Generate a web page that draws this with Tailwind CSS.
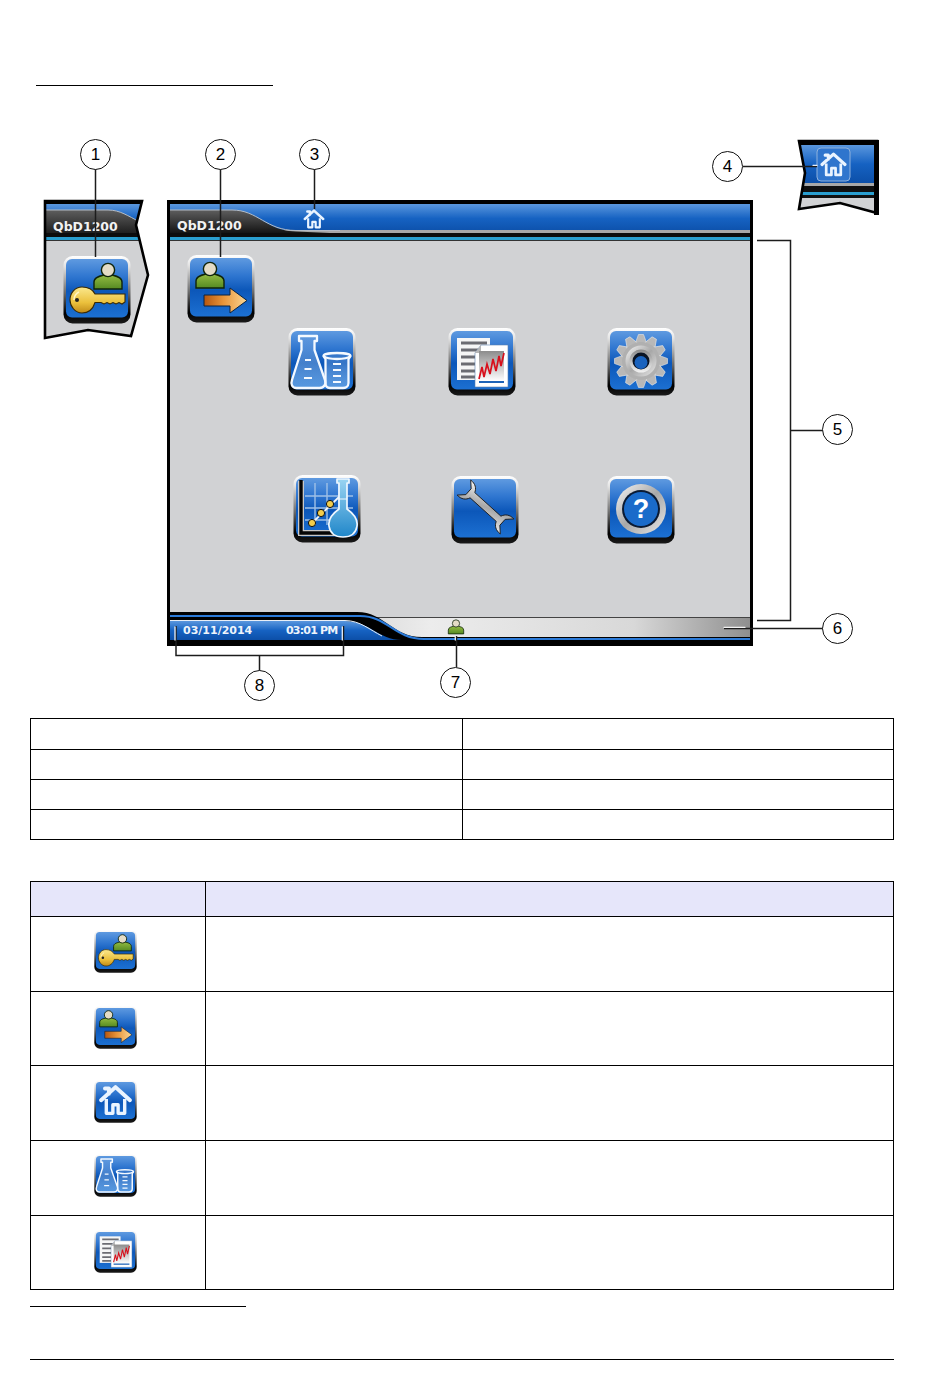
<!DOCTYPE html>
<html lang="en">
<head>
  <meta charset="UTF-8" />
  <title>QbD1200 Main Menu</title>
  <script src="https://cdn.jsdelivr.net/npm/@tailwindcss/browser@4"></script>
</head>
<body class="bg-white font-['Liberation_Sans',sans-serif] text-black">

<!-- shared gradients and icons -->
<svg class="absolute w-0 h-0" aria-hidden="true">
  <defs>
    <linearGradient id="halo" x1="0" y1="0" x2="0" y2="1">
      <stop offset="0" stop-color="#ffffff"/><stop offset=".15" stop-color="#e4e4e4"/><stop offset=".55" stop-color="#6a6a6a"/><stop offset=".85" stop-color="#000000"/><stop offset="1" stop-color="#1a1a1a"/>
    </linearGradient>
    <linearGradient id="face" x1="0" y1="0" x2="0" y2="1">
      <stop offset="0" stop-color="#5f9ae0"/><stop offset=".3" stop-color="#2f76d0"/><stop offset=".55" stop-color="#0c57b9"/><stop offset="1" stop-color="#1c70d2"/>
    </linearGradient>
    <linearGradient id="bar" x1="0" y1="0" x2="0" y2="1">
      <stop offset="0" stop-color="#5a97de"/><stop offset=".5" stop-color="#1662c2"/><stop offset="1" stop-color="#0c4fa8"/>
    </linearGradient>
    <linearGradient id="tab" x1="0" y1="0" x2="0" y2="1">
      <stop offset="0" stop-color="#5e5e5e"/><stop offset="1" stop-color="#141414"/>
    </linearGradient>
    <linearGradient id="gold" x1="0" y1="0" x2="0" y2="1">
      <stop offset="0" stop-color="#fbe98e"/><stop offset=".6" stop-color="#ebc03c"/><stop offset="1" stop-color="#c08a18"/>
    </linearGradient>
    <linearGradient id="arrow" x1="0" y1="0" x2="1" y2="0">
      <stop offset="0" stop-color="#b5560f"/><stop offset=".45" stop-color="#e8953a"/><stop offset="1" stop-color="#fbd794"/>
    </linearGradient>
    <linearGradient id="green" x1="0" y1="0" x2="0" y2="1">
      <stop offset="0" stop-color="#93bb42"/><stop offset="1" stop-color="#558a22"/>
    </linearGradient>
    <linearGradient id="silver" x1="0" y1="0" x2="1" y2="1">
      <stop offset="0" stop-color="#f6f6f6"/><stop offset=".5" stop-color="#a8a8a8"/><stop offset="1" stop-color="#e8e8e8"/>
    </linearGradient>
    <linearGradient id="ring" x1="0" y1="0" x2="0" y2="1">
      <stop offset="0" stop-color="#8a8a8a"/><stop offset="1" stop-color="#f2f2f2"/>
    </linearGradient>
    <linearGradient id="glass" x1="0" y1="0" x2="0" y2="1">
      <stop offset="0" stop-color="#ffffff" stop-opacity=".08"/><stop offset="1" stop-color="#8fc0ee" stop-opacity=".5"/>
    </linearGradient>
    <linearGradient id="chart" x1="0" y1="0" x2="0" y2="1">
      <stop offset="0" stop-color="#8c8c8c"/><stop offset="1" stop-color="#ffffff"/>
    </linearGradient>
    <linearGradient id="liquid" x1="0" y1="0" x2="0" y2="1">
      <stop offset="0" stop-color="#9ad4f2"/><stop offset="1" stop-color="#1f86c9"/>
    </linearGradient>
    <linearGradient id="strip" x1="0" y1="0" x2="1" y2="0">
      <stop offset="0" stop-color="#777777"/><stop offset=".12" stop-color="#bdbdbd"/><stop offset=".45" stop-color="#ececec"/><stop offset=".8" stop-color="#d8d8d8"/><stop offset="1" stop-color="#8f8f8f"/>
    </linearGradient>

    <g id="base">
      <rect x="0.5" y="0" width="67" height="67.500" rx="9" fill="url(#halo)"/>
      <rect x="3" y="3" width="62" height="58.500" rx="6" fill="url(#face)"/>
    </g>

    <g id="person">
      <path d="M-14 18 V11 C-14 6 -8 5 -4 4 H4 C8 5 14 6 14 11 V18 Z" fill="url(#green)" stroke="#10240a" stroke-width="1.4"/>
      <circle cx="0" cy="-1" r="6.600" fill="#e4dcc6" stroke="#10240a" stroke-width="1.4"/>
    </g>

    <symbol id="i-login" viewBox="0 0 68 68">
      <use href="#base"/>
      <use href="#person" x="45" y="15"/>
      <path d="M19 31 C25 31 30 34 32 38 H62 V46 L59 48 L56 46.500 L53 48 L50 46.500 L47 48 L44 46.500 L41 48 L38 46.500 H32 C30 53 25 57 19 57 C12 57 7 50 7 44 C7 37 12 31 19 31 Z" fill="url(#gold)" stroke="#3a2a05" stroke-width="1.1"/>
      <path d="M16 36 C12 38 11 41 11 44" fill="none" stroke="#fff6c4" stroke-width="1.5"/>
      <circle cx="14" cy="44" r="2" fill="#222"/>
    </symbol>

    <symbol id="i-logout" viewBox="0 0 68 68">
      <use href="#base"/>
      <use href="#person" x="23" y="15"/>
      <path d="M17 40 H43 V33 L60 45.500 L43 58 V51 H17 Z" fill="url(#arrow)" stroke="#0a2240" stroke-width="1"/>
    </symbol>

    <symbol id="i-flask" viewBox="0 0 68 68">
      <use href="#base"/>
      <g fill="url(#glass)" stroke="#f4f9ff" stroke-width="2.300" stroke-linejoin="round">
        <path d="M11 8 H29 V13 H26.500 V22 L37 52 C38.500 56 36 60 31.500 60 H8.500 C4 60 2.500 56 4 52 L13.500 22 V13 H11 Z"/>
        <path d="M35.500 28 C35.500 24 62.500 24 62.500 28 L60.500 31 V55 C60.500 59 57 60 55 60 H42 C39 60 37.500 58 37.500 55 V31 Z"/>
        <path d="M35.500 28 C40 32 58 32 62.500 28" fill="none"/>
      </g>
      <g stroke="#f4f9ff" stroke-width="2">
        <path d="M17 32 H23 M16.500 41 H23.500 M16 50 H24"/>
        <path d="M45 36 H53 M45 42 H53 M45 48 H53 M45 54 H53"/>
      </g>
    </symbol>

    <symbol id="i-report" viewBox="0 0 68 68">
      <use href="#base"/>
      <rect x="9" y="10" width="33" height="42" fill="#f6f6f6"/>
      <g stroke="#6c6c72" stroke-width="2.800">
        <path d="M13 15 H39 M13 22 H39 M13 29 H27 M13 36 H27 M13 43 H27 M13 49 H27"/>
      </g>
      <path d="M33 17 H60 V59 H27 V25 Z" fill="#ffffff" stroke="#5a7fae" stroke-width=".6"/>
      <path d="M27 25 L33 17 V25 Z" fill="#b5b5b5"/>
      <rect x="31" y="23" width="25" height="30" fill="url(#chart)"/>
      <path d="M31 51 L34 39 L36 49 L39 36 L42 46 L45 31 L48 43 L51 28 L53 38 L56 25" fill="none" stroke="#d8101c" stroke-width="1.700"/>
      <path d="M31 54 H56" stroke="#1d63b8" stroke-width="2"/>
    </symbol>

    <symbol id="i-gear" viewBox="0 0 68 68">
      <use href="#base"/>
      <g fill="#b8b8b8" stroke="#e8e8e8" stroke-width=".6">
        <path d="M31.500 6.500 H36.500 L40 16 H28 Z"/>
        <path transform="rotate(30 34 33)" d="M31.500 6.500 H36.500 L40 16 H28 Z"/>
        <path transform="rotate(60 34 33)" d="M31.500 6.500 H36.500 L40 16 H28 Z"/>
        <path transform="rotate(90 34 33)" d="M31.500 6.500 H36.500 L40 16 H28 Z"/>
        <path transform="rotate(120 34 33)" d="M31.500 6.500 H36.500 L40 16 H28 Z"/>
        <path transform="rotate(150 34 33)" d="M31.500 6.500 H36.500 L40 16 H28 Z"/>
        <path transform="rotate(180 34 33)" d="M31.500 6.500 H36.500 L40 16 H28 Z"/>
        <path transform="rotate(210 34 33)" d="M31.500 6.500 H36.500 L40 16 H28 Z"/>
        <path transform="rotate(240 34 33)" d="M31.500 6.500 H36.500 L40 16 H28 Z"/>
        <path transform="rotate(270 34 33)" d="M31.500 6.500 H36.500 L40 16 H28 Z"/>
        <path transform="rotate(300 34 33)" d="M31.500 6.500 H36.500 L40 16 H28 Z"/>
        <path transform="rotate(330 34 33)" d="M31.500 6.500 H36.500 L40 16 H28 Z"/>
      </g>
      <circle cx="34" cy="33" r="19" fill="#b0b0b0"/>
      <circle cx="34" cy="33" r="15.500" fill="url(#silver)"/>
      <circle cx="34" cy="33" r="11.500" fill="url(#ring)"/>
      <circle cx="34" cy="33" r="8.500" fill="#0a1424"/>
      <circle cx="34" cy="34.500" r="6.500" fill="#1a63be"/>
    </symbol>

    <symbol id="i-graph" viewBox="0 0 68 68">
      <use href="#base"/>
      <g stroke="#9fc0e6" stroke-width="1.400">
        <path d="M22 8 V50 M34 8 V50 M46 8 V50 M12 21 H60 M12 33 H60 M12 45 H60"/>
      </g>
      <path d="M8 6 V58 H52" fill="none" stroke="#c8c8c8" stroke-width="6"/>
      <path d="M8 5 V58 H52" fill="none" stroke="#050505" stroke-width="3.400"/>
      <path d="M19 48 L46 22" stroke="#f2f6fb" stroke-width="1.800"/>
      <g fill="#f3cd4c" stroke="#111" stroke-width="1">
        <circle cx="19" cy="48" r="3.600"/><circle cx="28" cy="38" r="3.600"/><circle cx="37" cy="29" r="3.600"/>
      </g>
      <path d="M44 4 H56 V8 H54 V34 C61 39 65 45 64 51 C63 58 58 62 50 62 C42 62 37 58 36 51 C35 45 39 39 46 34 V8 H44 Z" fill="url(#liquid)" stroke="#eef7ff" stroke-width="1.700" stroke-linejoin="round"/>
      <path d="M46 24 H54" stroke="#eef7ff" stroke-width="1"/>
    </symbol>

    <symbol id="i-wrench" viewBox="0 0 68 68">
      <use href="#base"/>
      <path transform="translate(34.500 31) rotate(42) scale(.88)" d="M-20 -4 L20 -4 C22 -9 26 -12 33 -11.500 L26 -4.500 L26 4.500 L33 11.500 C26 12 22 9 20 4 L-20 4 C-22 9 -26 12 -33 11.500 L-26 4.500 L-26 -4.500 L-33 -11.500 C-26 -12 -22 -9 -20 -4 Z" fill="url(#silver)" stroke="#1b1b1b" stroke-width="1"/>
    </symbol>

    <symbol id="i-help" viewBox="0 0 68 68">
      <use href="#base"/>
      <circle cx="34" cy="33" r="25" fill="url(#silver)"/>
      <circle cx="34" cy="33" r="19" fill="#0a1a33"/>
      <circle cx="34" cy="33" r="17" fill="#1a6bca"/>
      <text x="34" y="42" text-anchor="middle" font-family="Liberation Sans" font-weight="700" font-size="27" fill="#ffffff">?</text>
    </symbol>

    <symbol id="g-home" viewBox="0 0 26 24">
      <path d="M2 12 L13 2 L24 12 M5 3 H8 V7" fill="none" stroke="#eaf4ff" stroke-width="3" stroke-linejoin="round" stroke-linecap="round"/>
      <path d="M6 11 V22 H11 V15.500 H15 V22 H20 V11" fill="none" stroke="#eaf4ff" stroke-width="2.600" stroke-linejoin="round"/>
    </symbol>

    <symbol id="i-home" viewBox="0 0 68 68">
      <use href="#base"/>
      <use href="#g-home" x="7" y="7" width="54" height="50"/>
    </symbol>
  </defs>
</svg>

<div class="w-[950px] h-[1374px] overflow-hidden">

  <div class="pt-[85px] pl-[36px]">
    <div class="w-[237px] border-t border-black"></div>
  </div>

  <!-- annotated screen diagram, canvas y = page y - 86 -->
  <div class="relative h-[632px]">

    <!-- torn fragments, left and right of the main screen -->
    <svg class="absolute left-0 top-0" width="950" height="632" viewBox="0 86 950 632">
      <clipPath id="fragLeft"><path d="M45 201 H142 L136 225 L148 275 L131 336 L88 330 L45 338 Z"/></clipPath>
      <g clip-path="url(#fragLeft)">
        <rect x="44" y="200" width="110" height="140" fill="#d1d2d4"/>
        <rect x="44" y="200" width="110" height="4" fill="#000"/>
        <rect x="44" y="204" width="110" height="29" fill="url(#bar)"/>
        <path d="M44 210 H108 C120 210 128 216 140 222 V237 H44 Z" fill="url(#tab)"/>
        <path d="M44 210 H108 C120 210 128 216 140 222" fill="none" stroke="#b4bcc6" stroke-width="1"/>
        <rect x="44" y="233" width="110" height="4" fill="#0d0d0d"/>
        <rect x="44" y="237" width="110" height="3" fill="#2a9fd0"/>
        <rect x="44" y="240" width="110" height="1" fill="#333"/>
      </g>
      <path d="M45 201 H142 L136 225 L148 275 L131 336 L88 330 L45 338 Z" fill="none" stroke="#000" stroke-width="2.600"/>
      <text x="53" y="231" font-family="DejaVu Sans" font-weight="700" font-size="12.500" fill="#f2f2f2">QbD1200</text>

      <clipPath id="fragRight"><path d="M799 141 H878 V214 L840 203 L799 209 L805 173 Z"/></clipPath>
      <g clip-path="url(#fragRight)">
        <rect x="795" y="141" width="85" height="74" fill="#d1d2d4"/>
        <rect x="795" y="140" width="85" height="5" fill="#000"/>
        <rect x="795" y="145" width="85" height="38" fill="url(#bar)"/>
        <rect x="795" y="183" width="85" height="3" fill="#a8a8a8"/>
        <rect x="795" y="186" width="85" height="6" fill="#111"/>
        <rect x="795" y="192" width="85" height="3" fill="#2a9fd0"/>
        <rect x="795" y="195" width="85" height="3" fill="#111"/>
      </g>
      <path d="M799 141 H877 V213 L840 203 L799 209 L805 173 Z" fill="none" stroke="#000" stroke-width="2.600"/>
      <rect x="874" y="140" width="5" height="75" fill="#000"/>
      <rect x="817" y="148" width="33" height="33" rx="4" fill="#2f75cd" stroke="#8fb2dc" stroke-width="1"/>
      <use href="#g-home" x="819" y="152" width="29" height="25"/>
    </svg>

    <!-- main screen -->
    <div class="absolute left-[167px] top-[114px] w-[586px] h-[446px] bg-black px-[3px] pt-[4px] flex flex-col">
      <div class="relative h-[29px] shrink-0">
        <svg class="block" width="580" height="29" viewBox="0 0 580 29">
          <rect width="580" height="29" fill="url(#bar)"/>
          <rect y="26" width="580" height="3" fill="#a8a8a8"/>
          <path d="M0 6 H62 C88 6 96 27.500 126 27.500 L160 29 H0 Z" fill="url(#tab)"/>
          <path d="M0 6 H62 C88 6 96 26.500 126 26.500 H170" fill="none" stroke="#b4bcc6" stroke-width="1"/>
          <use href="#g-home" x="133" y="5" width="22" height="20"/>
        </svg>
        <span class="absolute left-[7px] top-[14px] text-[12.5px] leading-[16px] font-bold font-['DejaVu_Sans',sans-serif] text-[#f2f2f2]">QbD1200</span>
      </div>
      <div class="h-[4px] shrink-0 bg-[#0d0d0d]"></div>
      <div class="h-[3px] shrink-0 bg-[#2a9fd0]"></div>
      <div class="flex-1 bg-[#d1d2d4] border-t border-[#333] pl-[17px] pt-[14px]">
        <svg class="w-[68px] h-[68px]"><use href="#i-logout"/></svg>
        <div class="grid grid-cols-[160px_159px_68px] gap-y-[79px] ml-[101px] mt-[5px]">
          <svg class="w-[68px] h-[68px]"><use href="#i-flask"/></svg>
          <svg class="w-[68px] h-[68px]"><use href="#i-report"/></svg>
          <svg class="w-[68px] h-[68px]"><use href="#i-gear"/></svg>
          <svg class="w-[68px] h-[68px] ml-[5px]"><use href="#i-graph"/></svg>
          <svg class="w-[68px] h-[68px] ml-[3px] mt-[1px]"><use href="#i-wrench"/></svg>
          <svg class="w-[68px] h-[68px] mt-[1px]"><use href="#i-help"/></svg>
        </div>
      </div>
      <div class="relative h-[34px] shrink-0">
        <svg class="block" width="580" height="34" viewBox="0 0 580 34">
          <rect width="580" height="34" fill="#d1d2d4"/>
          <rect y="5" width="580" height="21" fill="url(#strip)"/>
          <rect y="5" width="580" height="1" fill="#444"/>
          <path d="M0 0 H187 C215 0 222 25 252 25 H580 V34 H0 Z" fill="#000"/>
          <path d="M0 4 H190 C218 4 224 27 254 27 H580" fill="none" stroke="#2b7ad8" stroke-width="2"/>
          <path d="M0 9 H175 C200 9 208 28 232 28 H0 Z" fill="url(#bar)"/>
          <path d="M0 8.500 H175 C190 8.500 200 18 212 24" fill="none" stroke="#e8eef6" stroke-width="1"/>
          <use href="#person" transform="translate(286 12) scale(.55)"/>
        </svg>
        <div class="absolute left-[13px] top-[12px] flex text-[11px] leading-[14px] font-bold font-['DejaVu_Sans',sans-serif] text-[#eef4fb]">
          <span class="w-[103px]">03/11/2014</span>
          <span class="tracking-[-0.8px]">03:01 PM</span>
        </div>
      </div>
    </div>

    <!-- key button on the left fragment -->
    <svg class="absolute left-[63px] top-[170px] w-[68px] h-[68px]"><use href="#i-login"/></svg>

    <!-- leader lines and brackets -->
    <svg class="absolute left-0 top-0 pointer-events-none" width="950" height="632" viewBox="0 86 950 632" fill="none">
      <g stroke="#1c1c1c" stroke-width="1.500">
        <path d="M95.500 168 V257 M220.500 168 V257 M314.500 168 V209"/>
        <path d="M743 166.500 H817"/>
        <path d="M757 240.500 H790.500 V620.500 H757 M790.500 430.500 H823"/>
        <path d="M823 628.500 H724"/>
        <path d="M456.500 667 V636"/>
        <path d="M176 626 V655.500 H343.500 V626 M259.500 655.500 V671"/>
      </g>
      <g stroke="#ffffff" stroke-width="1.300" stroke-linecap="round" opacity=".9">
        <path d="M724 627.300 H745 M813 165.300 H817 M175 627 V640 M342.300 627 V640 M455.300 637 V640"/>
      </g>
    </svg>

    <!-- callouts -->
    <div class="absolute left-[80px] top-[53px] w-[31px] h-[31px] rounded-full bg-white border-[1.5px] border-[#111] flex items-center justify-center text-[17px]">1</div>
    <div class="absolute left-[205px] top-[53px] w-[31px] h-[31px] rounded-full bg-white border-[1.5px] border-[#111] flex items-center justify-center text-[17px]">2</div>
    <div class="absolute left-[299px] top-[53px] w-[31px] h-[31px] rounded-full bg-white border-[1.5px] border-[#111] flex items-center justify-center text-[17px]">3</div>
    <div class="absolute left-[712px] top-[65px] w-[31px] h-[31px] rounded-full bg-white border-[1.5px] border-[#111] flex items-center justify-center text-[17px]">4</div>
    <div class="absolute left-[822px] top-[328px] w-[31px] h-[31px] rounded-full bg-white border-[1.5px] border-[#111] flex items-center justify-center text-[17px]">5</div>
    <div class="absolute left-[822px] top-[527px] w-[31px] h-[31px] rounded-full bg-white border-[1.5px] border-[#111] flex items-center justify-center text-[17px]">6</div>
    <div class="absolute left-[440px] top-[581px] w-[31px] h-[31px] rounded-full bg-white border-[1.5px] border-[#111] flex items-center justify-center text-[17px]">7</div>
    <div class="absolute left-[244px] top-[584px] w-[31px] h-[31px] rounded-full bg-white border-[1.5px] border-[#111] flex items-center justify-center text-[17px]">8</div>
  </div>

  <!-- legend table, text blanked -->
  <table class="ml-[30px] w-[864px] table-fixed border-collapse">
    <tbody>
      <tr class="h-[31px]"><td class="border border-black"></td><td class="border border-black"></td></tr>
      <tr class="h-[30px]"><td class="border border-black"></td><td class="border border-black"></td></tr>
      <tr class="h-[30px]"><td class="border border-black"></td><td class="border border-black"></td></tr>
      <tr class="h-[30px]"><td class="border border-black"></td><td class="border border-black"></td></tr>
    </tbody>
  </table>

  <!-- icon table -->
  <table class="ml-[30px] mt-[41px] w-[864px] table-fixed border-collapse">
    <colgroup><col class="w-[175px]" /><col /></colgroup>
    <tbody>
      <tr class="h-[35px] bg-[#e6e6fa]"><td class="border border-black"></td><td class="border border-black"></td></tr>
      <tr class="h-[75px]">
        <td class="border border-black align-top pt-[13px]"><svg class="ml-[63px] w-[43px] h-[43px]"><use href="#i-login"/></svg></td>
        <td class="border border-black"></td>
      </tr>
      <tr class="h-[74px]">
        <td class="border border-black align-top pt-[14px]"><svg class="ml-[63px] w-[43px] h-[43px]"><use href="#i-logout"/></svg></td>
        <td class="border border-black"></td>
      </tr>
      <tr class="h-[75px]">
        <td class="border border-black align-top pt-[14px]"><svg class="ml-[63px] w-[43px] h-[43px]"><use href="#i-home"/></svg></td>
        <td class="border border-black"></td>
      </tr>
      <tr class="h-[75px]">
        <td class="border border-black align-top pt-[13px]"><svg class="ml-[63px] w-[43px] h-[43px]"><use href="#i-flask"/></svg></td>
        <td class="border border-black"></td>
      </tr>
      <tr class="h-[74px]">
        <td class="border border-black align-top pt-[14px]"><svg class="ml-[63px] w-[43px] h-[43px]"><use href="#i-report"/></svg></td>
        <td class="border border-black"></td>
      </tr>
    </tbody>
  </table>

  <div class="ml-[30px] mt-[16px] w-[216px] border-t border-black"></div>
  <div class="ml-[30px] mt-[52px] w-[864px] border-t border-black"></div>
</div>

</body>
</html>
